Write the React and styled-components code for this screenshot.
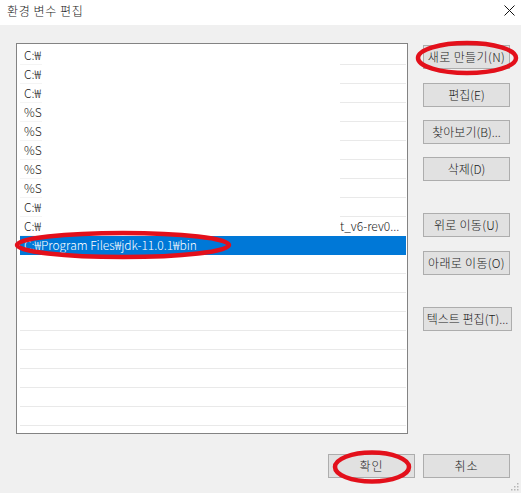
import React from "react";
import styled, { createGlobalStyle } from "styled-components";

const Global = createGlobalStyle`
  html, body { margin: 0; padding: 0; background: #f0f0f0; }
  body { font-family: "Noto Sans CJK KR", "Noto Sans", sans-serif; }
`;

const Window = styled.div`
  position: relative;
  width: 521px;
  height: 493px;
  background: #f0f0f0;
  overflow: hidden;
  font-size: 12px;
  color: #1a1a1a;
  font-weight: 300;
`;

const TitleBar = styled.div`
  height: 25px;
  background: #fff;
  display: flex;
  align-items: center;
  justify-content: space-between;
  padding: 0 6px 0 7px;
  box-sizing: border-box;
`;

const Title = styled.span`
  font-size: 12px;
  line-height: 14px;
  margin-top: -4px;
  letter-spacing: 0.6px;
`;

const CloseBtn = styled.span`
  display: flex;
  margin-top: -4px;
`;

const Body = styled.div`
  display: flex;
  padding: 18px 0 0 16px;
`;

const List = styled.div`
  width: 392px;
  height: 391px;
  box-sizing: border-box;
  border: 1px solid #838383;
  background: #fff;
  padding: 2px 0 0 3px;
  display: flex;
  flex-direction: column;
`;

const Row = styled.div`
  display: flex;
  width: 386px;
  height: 19px;
  flex: none;
  background: ${(p) => (p.selected ? "#0078d7" : "transparent")};
  color: ${(p) => (p.selected ? "#fff" : "#1a1a1a")};
`;

const Cell = styled.div`
  box-sizing: border-box;
  height: 19px;
  border-bottom: 1px solid ${(p) => p.line || "transparent"};
  line-height: 18px;
  white-space: nowrap;
  font-size: 12px;
`;

const Lead = styled(Cell)`
  width: 22px;
  padding-left: 4px;
  overflow: visible;
`;

const Mid = styled(Cell)`
  flex: 1;
`;

const Tail = styled(Cell)`
  width: 66px;
  overflow: hidden;
`;

const Side = styled.div`
  display: flex;
  flex-direction: column;
  margin-left: 15px;
  padding-top: 2px;
`;

const Button = styled.button`
  box-sizing: border-box;
  width: ${(p) => p.w || 87}px;
  height: 24px;
  margin-top: ${(p) => p.mt || 0}px;
  padding: 0;
  border: 1px solid #adadad;
  background: #e1e1e1;
  font-family: "Noto Sans CJK KR", "Noto Sans", sans-serif;
  font-weight: 300;
  font-size: 12px;
  color: #1a1a1a;
  white-space: nowrap;
  overflow: visible;
  display: flex;
  align-items: center;
  justify-content: center;
  line-height: 14px;
  letter-spacing: ${(p) => p.ls || 0}px;
`;

const Footer = styled.div`
  display: flex;
  justify-content: flex-end;
  gap: 8px;
  padding-right: 11px;
  margin-top: 20px;
`;

const Overlay = styled.svg`
  position: absolute;
  left: 0;
  top: 0;
  pointer-events: none;
`;

const SEP = "#e9e9e9";
const FAINT = "#f4f4f4";

const rows = [
  { lead: "C:₩" },
  { lead: "C:₩" },
  { lead: "C:₩" },
  { lead: "%S" },
  { lead: "%S" },
  { lead: "%S" },
  { lead: "%S" },
  { lead: "%S" },
  { lead: "C:₩" },
  { lead: "C:₩", tail: "t_v6-rev0..." },
];

const sideButtons = [
  { label: "새로 만들기(N)", mt: 0, ls: 0.4 },
  { label: "편집(E)", mt: 14 },
  { label: "찾아보기(B)...", mt: 13 },
  { label: "삭제(D)", mt: 13 },
  { label: "위로 이동(U)", mt: 32, ls: 0.3 },
  { label: "아래로 이동(O)", mt: 14, ls: 0.3 },
  { label: "텍스트 편집(T)...", mt: 32, w: 89 },
];

export default function App() {
  return (
    <Window>
      <Global />
      <TitleBar>
        <Title>환경 변수 편집</Title>
        <CloseBtn>
          <svg width="11" height="11" viewBox="0 0 11 11">
            <path d="M0.5 0.5 L10.5 10.5 M10.5 0.5 L0.5 10.5" stroke="#111" strokeWidth="1" />
          </svg>
        </CloseBtn>
      </TitleBar>
      <Body>
        <List>
          {rows.map((r, i) => (
            <Row key={i}>
              <Lead line={FAINT}>{r.lead}</Lead>
              <Mid />
              <Tail line={i === rows.length - 1 ? "transparent" : SEP}>{r.tail || ""}</Tail>
            </Row>
          ))}
          <Row selected>
            <Lead>C:₩Program Files₩jdk-11.0.1₩bin</Lead>
            <Mid />
            <Tail />
          </Row>
          {Array.from({ length: 9 }).map((_, i) => (
            <Row key={"e" + i}>
              <Lead line={SEP} />
              <Mid line={SEP} />
              <Tail line={SEP} />
            </Row>
          ))}
        </List>
        <Side>
          {sideButtons.map((b) => (
            <Button key={b.label} mt={b.mt} w={b.w} ls={b.ls}>
              {b.label}
            </Button>
          ))}
        </Side>
      </Body>
      <Footer>
        <Button ls={1}>확인</Button>
        <Button ls={1}>취소</Button>
      </Footer>
      <Overlay width="521" height="493" viewBox="0 0 521 493">
        <g fill="none" stroke="#e3101b" strokeWidth="4.5">
          <ellipse cx="467" cy="58" rx="49" ry="15" />
          <ellipse cx="123" cy="245" rx="106" ry="12" />
          <ellipse cx="372" cy="467" rx="37" ry="14.5" />
        </g>
        <g fill="#b5b5b5">
          <rect x="517" y="483" width="1.5" height="1.5" />
          <rect x="514" y="486" width="1.5" height="1.5" />
          <rect x="517" y="486" width="1.5" height="1.5" />
          <rect x="511" y="489" width="1.5" height="1.5" />
          <rect x="514" y="489" width="1.5" height="1.5" />
          <rect x="517" y="489" width="1.5" height="1.5" />
        </g>
      </Overlay>
    </Window>
  );
}
